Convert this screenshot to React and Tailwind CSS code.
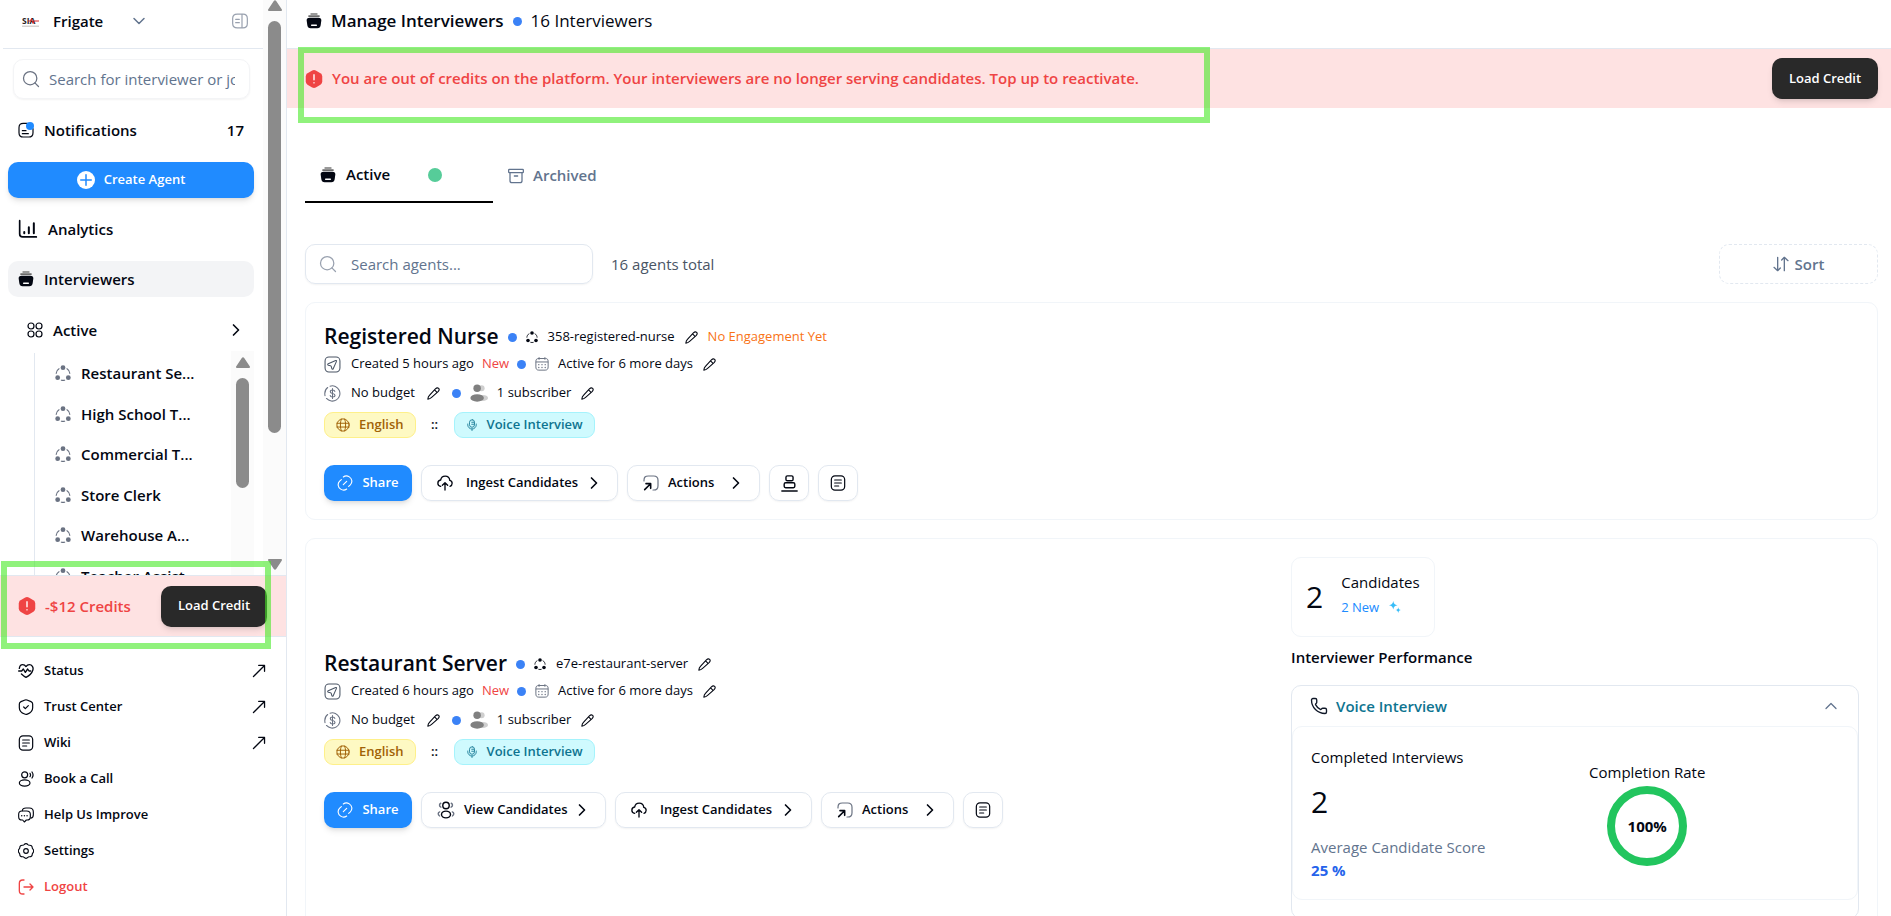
import React from 'react';
import { ChevronDown, ChevronRight, ChevronUp, Phone, Search } from 'lucide-react';

const Svg = ({ size = 'size-4', className = '', w = 1.5, children }) => (
  <svg
    viewBox="0 0 24 24"
    fill="none"
    stroke="currentColor"
    strokeWidth={w}
    strokeLinecap="round"
    strokeLinejoin="round"
    aria-hidden="true"
    className={`shrink-0 ${size} ${className}`}
  >
    {children}
  </svg>
);

const StackIcon = () => (
  <Svg w={2}>
    <path d="M7.500 1.500h9" stroke="#7a7a7a" />
    <path d="M4.500 4.600h15" stroke="#6b6b6b" strokeWidth={2.600} />
    <path
      d="M5.500 7h13c3.200 0 4.900 1.600 4.500 4.200l-1 7.300c-.4 3-2 4.500-5 4.500H7c-3 0-4.600-1.500-5-4.500l-1-7.300C.6 8.600 2.300 7 5.500 7z"
      fill="currentColor"
      stroke="none"
    />
    <path d="M8.500 18.500h7" stroke="white" strokeWidth={2.200} />
  </Svg>
);

const NotificationIcon = () => (
  <Svg w={1.800}>
    <path d="M14 2H8C3.500 2 1.500 4 1.500 8.500V16c0 4.500 2 6.500 6.500 6.500h8c4.500 0 6.500-2 6.500-6.500v-6" />
    <path d="M6.500 13H12M6.500 17.500h9" />
    <circle cx="18" cy="6" r="6" fill="#208bff" stroke="none" />
  </Svg>
);

const ChartIcon = () => (
  <Svg size="size-5" w={2}>
    <path d="M2 2v16c0 2 1 3.500 3.500 3.500H22" />
    <path d="M7.500 15.500V17M13 10v7M19 5v12" strokeWidth={2.400} />
  </Svg>
);

const GridIcon = () => (
  <Svg w={1.800}>
    <circle cx="6" cy="6" r="4.500" />
    <circle cx="18" cy="6" r="4.500" />
    <circle cx="6" cy="18" r="4.500" />
    <circle cx="18" cy="18" r="4.500" />
  </Svg>
);

const NodesIcon = ({ size, className }) => (
  <Svg size={size} className={className} w={1.700}>
    <g fill="currentColor" stroke="none">
      <circle cx="12" cy="4" r="3.600" />
      <circle cx="4" cy="19" r="3.600" />
      <circle cx="20" cy="19" r="3.600" />
    </g>
    <path d="M6 5.500C3.500 7 2 9.500 1.800 12.500M18 5.500c2.500 1.500 4 4 4.200 7M9.500 22.800c1.600.4 3.400.4 5 0" />
  </Svg>
);

const DangerIcon = () => (
  <Svg size="size-[18px]">
    <path
      d="M9.600.8a5 5 0 0 1 4.800 0l6.200 3.600A5 5 0 0 1 23 8.600v6.800a5 5 0 0 1-2.400 4.200l-6.200 3.600a5 5 0 0 1-4.800 0l-6.200-3.600A5 5 0 0 1 1 15.400V8.600a5 5 0 0 1 2.400-4.200z"
      fill="#ef4444"
      stroke="none"
    />
    <path d="M12 6.500v6.500M12 17v.1" stroke="#fee2e2" strokeWidth={2.200} />
  </Svg>
);

const StatusIcon = () => (
  <Svg w={2}>
    <path d="M2 8C2.500 4.500 4.500 2.500 7 2.500c2 0 3.800 1 5 2.800 1.200-1.800 3-2.800 5-2.800 4 0 6.500 4 5.300 8C20.800 15.500 15 20 12 21.500c-1.800-.9-4.500-2.800-6.800-5" />
    <path d="M1 12h4.500l2.500-3 3 5 3.500-5 2 3h2.500" />
  </Svg>
);

const ShieldIcon = () => (
  <Svg w={1.800}>
    <path d="M10.500 1.500 4.500 4C3 4.600 2 6 2 7.500V13c0 4.500 4 8 8 9.600 1.300.5 2.700.5 4 0 4-1.600 8-5.100 8-9.600V7.500C22 6 21 4.600 19.500 4l-6-2.500a4 4 0 0 0-3 0z" />
    <path d="m8.500 12 2.500 2.500L15.500 10" />
  </Svg>
);

const NoteIcon = ({ size }) => (
  <Svg size={size} w={1.800}>
    <rect x="2" y="1.300" width="20" height="21.400" rx="5.500" />
    <path d="M7 7.500h10M7 12h10M7 16.500h6" />
  </Svg>
);

const UserSpeakIcon = () => (
  <Svg w={1.800}>
    <circle cx="10" cy="5.800" r="4.500" />
    <ellipse cx="10" cy="18" rx="8" ry="4.600" />
    <path d="M18 3.500c1 1.500 1 3.500 0 5M21 1.500c2 2.800 2 6.200 0 9" />
  </Svg>
);

const ChatIcon = () => (
  <Svg w={1.700}>
    <path d="M6.500 5.500C6.800 2.500 8.500 1.500 12 1.500h5c4.500 0 6 1.600 6 6v4c0 3-1 4.700-3.500 5.200" />
    <path d="M6 6h7c4 0 5.500 1.500 5.500 5v3.500c0 3.500-1.500 5-5 5h-1L9.500 22.500 7 19.500H6c-3.500 0-5-1.500-5-5V11c0-3.500 1.500-5 5-5z" />
    <path d="M5.600 13v.1M9.600 13v.1M13.600 13v.1" strokeWidth={2.200} />
  </Svg>
);

const GearIcon = () => (
  <Svg w={1.700}>
    <circle cx="12" cy="12" r="3.500" />
    <path d="M9.300 2.300c1.300-1.700 4.100-1.700 5.400 0 .6.900 1.500 1.300 2.600 1.100 2.200-.3 3.900 1.100 4 3.200 0 1 .3 1.700 1 2.400 1.400 1.700 1.400 4.300 0 6-.7.700-1 1.400-1 2.400-.1 2.100-1.800 3.500-4 3.200-1.100-.2-2 .2-2.600 1.100-1.300 1.700-4.100 1.700-5.400 0-.6-.9-1.500-1.300-2.600-1.100-2.200.3-3.900-1.100-4-3.200 0-1-.3-1.700-1-2.400-1.400-1.700-1.400-4.300 0-6 .7-.7 1-1.400 1-2.400.1-2.100 1.800-3.500 4-3.200 1.100.2 2-.2 2.600-1.100z" />
  </Svg>
);

const LogoutIcon = () => (
  <Svg w={2}>
    <path d="M9 1.500H7c-3.500 0-5 1.500-5 5v11c0 3.500 1.500 5 5 5h2" />
    <path d="M9 12h13.500M18 7.500l4.500 4.500-4.500 4.500" />
  </Svg>
);

const ArrowOut = () => (
  <Svg size="size-3.5" w={2.200}>
    <path d="M2.500 21.500 21 3M11.500 2.500H21.500V12.500" />
  </Svg>
);

const SidebarIcon = () => (
  <Svg className="text-gray-400" w={1.800}>
    <path d="M15 1.800H8c-5 0-7 2-7 6.500v7.400c0 4.500 2 6.500 7 6.500h7zM15 1.800h1.500c4.500 0 6.500 2 6.500 6.500v7.400c0 4.500-2 6.500-6.500 6.500H15z" />
    <path d="M5.500 9.500H11M5.500 14.500H11" />
  </Svg>
);

const PencilIcon = () => (
  <Svg size="size-[13px]" w={2}>
    <path d="M15.500 3.500c2-2 4.500-2.300 6-1 1.400 1.500 1 4-1 6L8.500 19c-2 1.800-4 3-7 3.500.3-3 1.300-5.200 3-7zM14 5.500l4.500 4.500" />
  </Svg>
);

const SendIcon = () => (
  <Svg size="size-[17px]" className="text-gray-600">
    <rect x="1.500" y="1.500" width="21" height="21" rx="5.500" />
    <path d="m6 11 10.500-4.500c1-.4 1.500.1 1.100 1.100L13 18c-.5 1.100-1.600 1-1.900-.1l-.8-3c-.1-.5-.5-.9-1-1L6.100 13c-1.200-.4-1.200-1.500-.1-2z" />
  </Svg>
);

const CalendarIcon = () => (
  <Svg size="size-3.5" className="text-gray-500" w={1.700}>
    <path d="M7 1v3M17 1v3M1.800 8.500h20.400M6 2.600h12c3 0 4.500 1.500 4.500 5V17c0 3.500-1.500 5.500-5 5.500h-11c-3.500 0-5-2-5-5.500V7.600c0-3.500 1.500-5 4.500-5z" />
    <path d="M6.500 13v.1M12 13v.1M17.500 13v.1M6.500 18v.1M12 18v.1M17.500 18v.1" strokeWidth={2.400} />
  </Svg>
);

const DollarIcon = () => (
  <Svg size="size-[17px]" className="text-gray-500">
    <path d="M8.500 1.600A10.800 10.800 0 1 1 3.500 19M1.400 15C.5 10 2.500 5.500 5.200 3.500" />
    <path d="M15.300 9c-.3-1.300-1.500-2-3.200-2-1.900 0-3.200.9-3.200 2.400 0 3.600 6.600 1.600 6.600 5.200 0 1.500-1.400 2.400-3.400 2.400-1.900 0-3.200-.9-3.400-2.300M12 5v14" />
  </Svg>
);

const UsersIcon = () => (
  <Svg size="size-[18px]">
    <g stroke="none">
      <circle cx="15.500" cy="5.500" r="4" fill="#cfcfcf" />
      <ellipse cx="17" cy="18.500" rx="7" ry="4" fill="#cfcfcf" />
      <circle cx="9.500" cy="5.500" r="5" fill="#808080" />
      <ellipse cx="9.500" cy="18.500" rx="9" ry="5" fill="#808080" />
    </g>
  </Svg>
);

const GlobeIcon = () => (
  <Svg size="size-3.5" w={1.700}>
    <circle cx="12" cy="12" r="10.500" />
    <path d="M1.500 9h21M1.500 15.500h21M9 1.800C7 8 7 16 9 22.200M15 1.800c2 6.200 2 14.200 0 20.400" />
  </Svg>
);

const MicIcon = () => (
  <Svg size="size-3" w={1.700}>
    <rect x="7" y="1.500" width="10" height="15" rx="5" />
    <path d="M3.500 10v1.500a8.500 8.500 0 0 0 17 0V10M12 20v3M11.500 6.500H16M11.500 10.500H16" />
  </Svg>
);

const LinkIcon = () => (
  <Svg w={1.700}>
    <path d="M9.500 3C12 1 15.500.800 18.500 2.800c4.500 3 5 8.500 1.500 12L17.500 17M14.500 21c-2.500 2-6 2.200-9 .2-4.500-3-5-8.500-1.500-12L6.500 7M9.500 14.500l5-5" />
  </Svg>
);

const CloudIcon = () => (
  <Svg w={2}>
    <path d="M5.500 17C3 16.500 1.300 14.800 1.300 12.200c0-2.500 1.800-4.400 4.200-4.700C6.200 4 9 1.700 12.300 1.700c3.600 0 6.500 2.700 6.900 6.300 2.100.5 3.500 2.200 3.500 4.500 0 2.200-1.200 3.900-3.200 4.500" />
    <path d="M12 22.500V12M8 15.500l4-4 4 4" />
  </Svg>
);

const ActionIcon = () => (
  <Svg w={1.800}>
    <path
      d="M1.500 9V8c0-4.800 1.700-6.500 6.500-6.500h8c4.800 0 6.500 1.700 6.500 6.500v8c0 4.800-1.700 6.500-6.500 6.500h-1"
      className="text-gray-500"
      stroke="currentColor"
    />
    <path d="M2.500 22 11 13.500M4.500 13H11.500V20" strokeWidth={2.400} />
  </Svg>
);

const StampIcon = () => (
  <Svg size="size-[17px]" w={2}>
    <rect x="7" y="1.200" width="10" height="7" rx="2" />
    <rect x="4.500" y="11" width="15" height="7" rx="2" />
    <path d="M1.200 22.500h21.600" />
  </Svg>
);

const CandidatesIcon = () => (
  <Svg size="size-[18px]" w={1.900}>
    <circle cx="12" cy="6" r="4.300" />
    <ellipse cx="12" cy="18" rx="6" ry="4.500" />
    <path
      d="M5 3c-2 .8-2.500 4 .2 5.300M19 3c2 .8 2.500 4-.2 5.300M3.500 14.500c-2.500 1-2.500 4 0 5.500M20.500 14.500c2.500 1 2.500 4 0 5.500"
      className="text-gray-500"
      stroke="currentColor"
    />
  </Svg>
);

const SparkleIcon = () => (
  <Svg size="size-3">
    <g fill="#38bdf8" stroke="none">
      <path d="M8.500 0c1 5.500 3 7.500 8.500 8.500-5.500 1-7.500 3-8.500 8.500C7.500 11.500 5.500 9.500 0 8.500 5.500 7.500 7.500 5.500 8.500 0z" />
      <path d="M18.500 12.500c.6 3.500 2 5 5.500 5.700-3.500.7-4.900 2.200-5.500 5.800-.6-3.600-2-5.100-5.500-5.800 3.500-.7 4.900-2.200 5.500-5.700z" />
    </g>
  </Svg>
);

const ArchiveIcon = () => (
  <Svg w={1.900}>
    <rect x="1" y="2" width="22" height="5" rx="1" />
    <path d="M3 7.500V19c0 2 1 3 3 3h12c2 0 3-1 3-3V7.500M9.500 12h5" />
  </Svg>
);

const SortIcon = () => (
  <Svg w={2}>
    <path d="M7 2v20M1.500 17 7 22l4-4M17 22V2M13 6l4-4 5.500 5" />
  </Svg>
);

const Dot = () => <span className="size-[9px] shrink-0 rounded-full bg-[#3b82f6]" />;

const EditButton = ({ label }) => (
  <button type="button" aria-label={label}>
    <PencilIcon />
  </button>
);

const LoadCreditButton = () => (
  <button
    type="button"
    className="h-[41px] w-[106px] shrink-0 rounded-[10px] bg-[#292929] text-[13px] font-semibold text-white shadow-md"
  >
    Load Credit
  </button>
);

const Triangle = ({ down }) => (
  <svg viewBox="0 0 14 11" className="h-[11px] w-3.5" fill="#8b8b8b" aria-hidden="true">
    {down ? (
      <path d="M1 0h12c1 0 1.300.9.700 1.700L8.200 10c-.7 1-1.700 1-2.400 0L.3 1.700C-.3.900 0 0 1 0z" />
    ) : (
      <path d="M1 11h12c1 0 1.300-.9.700-1.700L8.200 1c-.7-1-1.700-1-2.400 0L.3 9.300C-.3 10.100 0 11 1 11z" />
    )}
  </svg>
);

const activeAgents = [
  'Restaurant Se...',
  'High School T...',
  'Commercial T...',
  'Store Clerk',
  'Warehouse A...',
  'Teacher Assist...',
];

const footerLinks = [
  { label: 'Status', icon: <StatusIcon />, external: true },
  { label: 'Trust Center', icon: <ShieldIcon />, external: true },
  { label: 'Wiki', icon: <NoteIcon />, external: true },
  { label: 'Book a Call', icon: <UserSpeakIcon /> },
  { label: 'Help Us Improve', icon: <ChatIcon /> },
  { label: 'Settings', icon: <GearIcon /> },
];

const SidebarTop = () => (
  <div className="flex min-h-0 flex-1">
    <div className="flex min-w-0 flex-1 flex-col">
      <div className="ml-[3px] flex h-[49px] shrink-0 items-center border-b border-slate-200 pr-[15px] pb-1.5 pl-[19px]">
        <svg viewBox="0 0 34 22" className="h-[11px] w-[17px]" aria-hidden="true">
          <rect y="19" width="34" height="3" fill="#d6d3d1" />
          <text x="0" y="16" fontSize="17" fontWeight="700" fill="#292524">
            SIA
          </text>
          <path d="M12 10h5l2-5 3 10 2-5h10" stroke="#dc2626" strokeWidth="2" fill="none" />
        </svg>
        <button type="button" className="ml-3.5 flex items-center gap-[26px] text-[15px] font-semibold">
          Frigate
          <ChevronDown className="size-5 text-slate-500" strokeWidth={1.800} />
        </button>
        <button type="button" aria-label="Collapse sidebar" className="ml-auto">
          <SidebarIcon />
        </button>
      </div>

      <label className="mt-[10px] mr-[13px] ml-[13px] flex h-10 shrink-0 items-center gap-2 rounded-[10px] border border-gray-100 pr-3.5 pl-[7px] shadow-xs">
        <Search className="size-5 shrink-0 text-gray-500" strokeWidth={1.500} />
        <input
          type="text"
          aria-label="Search interviewers"
          placeholder="Search for interviewer or job"
          className="w-full min-w-0 text-[15px] outline-none placeholder:text-slate-500"
        />
      </label>

      <nav className="flex min-h-0 flex-1 flex-col pr-[9px] pl-2 text-[15px] font-semibold">
        <a href="#notifications" className="mt-[13px] flex h-9 shrink-0 items-center gap-2.5 px-2.5">
          <NotificationIcon />
          Notifications
          <span className="ml-auto">17</span>
        </a>
        <button
          type="button"
          className="mt-3.5 flex h-9 shrink-0 items-center justify-center gap-[9px] rounded-[10px] bg-[#208bff] text-[13px] text-white shadow-md"
        >
          <svg viewBox="0 0 24 24" className="size-[18px]" aria-hidden="true">
            <circle cx="12" cy="12" r="12" fill="white" />
            <path d="M12 5v14M5 12h14" stroke="#208bff" strokeWidth="2" strokeLinecap="round" />
          </svg>
          Create Agent
        </button>
        <a href="#analytics" className="mt-[13px] flex h-9 shrink-0 items-center gap-2.5 px-2.5">
          <ChartIcon />
          Analytics
        </a>
        <a
          href="#interviewers"
          className="mt-3.5 flex h-9 shrink-0 items-center gap-2.5 rounded-[10px] bg-gray-100 px-2.5"
        >
          <StackIcon />
          Interviewers
        </a>
        <button type="button" className="mt-[15px] flex h-9 shrink-0 items-center gap-2.5 pr-2 pl-[19px]">
          <GridIcon />
          Active
          <ChevronRight className="ml-auto size-5" />
        </button>

        <div className="mt-[3px] ml-[26px] flex min-h-0 flex-1 justify-between overflow-hidden">
          <div className="mt-0.5 min-w-0 flex-1 border-l border-slate-200 pl-5">
            <ul className="grid h-[243px] grid-rows-6">
              {activeAgents.map((name) => (
                <li key={name} className="flex items-center">
                  <a href="#agent" className="flex items-center gap-2.5 whitespace-nowrap">
                    <NodesIcon className="text-gray-500" />
                    {name}
                  </a>
                </li>
              ))}
            </ul>
          </div>
          <div className="flex w-[23px] shrink-0 flex-col items-center bg-[#fbfbfb] pt-1.5">
            <Triangle />
            <div className="mt-2.5 h-[110px] w-[13px] rounded-full bg-[#8b8b8b]" />
          </div>
        </div>
      </nav>
    </div>

    <div className="flex w-[23px] shrink-0 flex-col items-center bg-[#fbfbfb] pb-[5px]">
      <Triangle />
      <div className="mt-2.5 h-[412px] w-[13px] rounded-full bg-[#8b8b8b]" />
      <div className="mt-auto">
        <Triangle down />
      </div>
    </div>
  </div>
);

const Sidebar = () => (
  <aside className="flex w-[287px] shrink-0 flex-col border-r border-slate-200">
    <SidebarTop />
    <div className="relative flex h-[62px] shrink-0 items-center justify-between border-y border-slate-200 bg-[#fee2e2] pr-[19px] pl-[18px]">
      <p className="flex items-center gap-[9px] text-[15px] font-semibold text-[#ef4444]">
        <DangerIcon />
        -$12 Credits
      </p>
      <LoadCreditButton />
      <div className="pointer-events-none absolute -top-[15px] -bottom-[13px] left-px w-[270px] border-6 border-[rgb(70_233_37/0.6)]" />
    </div>
    <ul className="h-[279px] shrink-0 pt-4 pr-5 pl-[18px] text-[13px] font-semibold">
      {footerLinks.map(({ label, icon, external }) => (
        <li key={label}>
          <a href="#link" className="flex h-9 items-center gap-2.5">
            {icon}
            {label}
            {external && (
              <span className="ml-auto">
                <ArrowOut />
              </span>
            )}
          </a>
        </li>
      ))}
      <li>
        <button type="button" className="flex h-9 items-center gap-2.5 text-[#ef4444]">
          <LogoutIcon />
          Logout
        </button>
      </li>
    </ul>
  </aside>
);

const OutlineButton = ({ icon, label, width, gap = 'gap-[9px]' }) => (
  <button
    type="button"
    className={`flex h-9 items-center justify-between rounded-[10px] border border-slate-200 pr-[13px] pl-[15px] font-semibold whitespace-nowrap shadow-xs ${width}`}
  >
    <span className={`flex items-center ${gap}`}>
      {icon}
      {label}
    </span>
    <ChevronRight className="size-5 shrink-0" />
  </button>
);

const IconButton = ({ icon, label }) => (
  <button
    type="button"
    aria-label={label}
    className="flex h-9 w-10 items-center justify-center rounded-[10px] border border-slate-200 shadow-xs"
  >
    {icon}
  </button>
);

const AgentInfo = ({ name, slug, created, noEngagement, hasCandidates }) => (
  <div className="text-[13px]">
    <div className="flex h-8 items-center">
      <h2 className="mr-[9px] text-[21px] font-semibold">{name}</h2>
      <Dot />
      <span className="mr-2.5 ml-[9px] flex items-center gap-2.5">
        <NodesIcon size="size-3" />
        {slug}
      </span>
      <EditButton label="Edit slug" />
      {noEngagement && <span className="ml-2.5 text-[#f97316]">No Engagement Yet</span>}
    </div>
    <div className="flex h-[22px] items-center">
      <SendIcon />
      <span className="ml-2.5">Created {created} ago</span>
      <span className="mx-2 text-[#ef4444]">New</span>
      <Dot />
      <span className="mr-2.5 ml-[9px] flex items-center gap-[9px]">
        <CalendarIcon />
        Active for 6 more days
      </span>
      <EditButton label="Edit active period" />
    </div>
    <div className="mt-1 flex h-7 items-center">
      <DollarIcon />
      <span className="mr-3 ml-2.5">No budget</span>
      <EditButton label="Edit budget" />
      <span className="ml-3 flex items-center gap-[9px]">
        <Dot />
        <UsersIcon />
      </span>
      <span className="mr-2.5 ml-[9px]">1 subscriber</span>
      <EditButton label="Edit subscribers" />
    </div>
    <div className="mt-[5px] flex h-[26px] items-center font-semibold">
      <span className="flex h-[26px] items-center gap-[9px] rounded-[9px] border border-[#fef08a] bg-[#fef9c3] px-[11px] text-[#a16207]">
        <GlobeIcon />
        English
      </span>
      <span className="w-[38px] text-center">::</span>
      <span className="flex h-[26px] items-center gap-[9px] rounded-[9px] border border-[#a5f3fc] bg-[#cffafe] px-[11px] text-[#0e7490]">
        <MicIcon />
        Voice Interview
      </span>
    </div>
    <div className="mt-[27px] flex gap-[9px]">
      <button
        type="button"
        className="flex h-9 w-22 items-center justify-center gap-[9px] rounded-[10px] bg-[#208bff] font-semibold text-white shadow-md"
      >
        <LinkIcon />
        Share
      </button>
      {hasCandidates && (
        <OutlineButton icon={<CandidatesIcon />} label="View Candidates" width="w-[185px]" />
      )}
      <OutlineButton icon={<CloudIcon />} label="Ingest Candidates" width="w-[197px]" gap="gap-[13px]" />
      <OutlineButton icon={<ActionIcon />} label="Actions" width="w-[133px]" />
      {!hasCandidates && <IconButton icon={<StampIcon />} label="Stamp" />}
      <IconButton icon={<NoteIcon />} label="Notes" />
    </div>
  </div>
);

const Performance = () => (
  <div className="w-[37%] text-[15px]">
    <div className="flex h-20 w-fit items-center gap-[18px] rounded-[10px] border border-slate-100 px-3.5">
      <span className="text-[30px] leading-9">2</span>
      <div className="pb-1">
        <p className="leading-6">Candidates</p>
        <p className="flex items-center gap-2.5 text-[13px] leading-[26px] text-[#208bff]">
          2 New <SparkleIcon />
        </p>
      </div>
    </div>
    <h3 className="mt-2 text-[15px] leading-6 font-semibold">Interviewer Performance</h3>
    <section className="mt-4 rounded-[10px] border border-slate-200 pb-[18px]">
      <button
        type="button"
        className="flex h-10 w-full items-center gap-2 pr-[17px] pl-[18px] font-semibold text-[#0e7490]"
      >
        <Phone className="size-[18px] text-gray-900" strokeWidth={1.800} />
        Voice Interview
        <ChevronUp className="ml-auto size-5 text-slate-500" strokeWidth={1.500} />
      </button>
      <div className="grid grid-cols-2 items-center gap-7 rounded-[10px] border border-slate-100 p-[18px]">
        <div>
          <p className="leading-6">Completed Interviews</p>
          <p className="my-[15px] text-[30px] leading-9">2</p>
          <p className="leading-6 text-slate-500">Average Candidate Score</p>
          <p className="leading-[22px] font-bold text-[#2563eb]">25 %</p>
        </div>
        <div className="flex w-fit flex-col items-center">
          <p className="leading-6">Completion Rate</p>
          <div className="mt-0.5 flex size-20 items-center justify-center rounded-full border-8 border-[#22c55e] text-[15px] font-bold">
            100%
          </div>
        </div>
      </div>
    </section>
  </div>
);

const App = () => (
  <div className="flex h-screen overflow-hidden bg-white font-['Open_Sans','Noto_Sans',sans-serif] text-gray-950">
    <Sidebar />
    <main className="min-w-0 flex-1">
      <header className="flex h-[49px] items-center gap-[9px] border-b border-slate-200 pb-1.5 pl-[19px] text-[17px]">
        <StackIcon />
        <h1 className="font-semibold">Manage Interviewers</h1>
        <Dot />
        <span>16 Interviewers</span>
      </header>

      <div className="relative flex h-[59px] items-center justify-between bg-[#fee2e2] pr-[13px] pl-[18px]">
        <p className="flex items-center gap-[9px] text-[15px] font-semibold text-[#ef4444]">
          <DangerIcon />
          You are out of credits on the platform. Your interviewers are no longer serving candidates. Top up to
          reactivate.
        </p>
        <LoadCreditButton />
        <div className="pointer-events-none absolute -top-0.5 -bottom-[15px] left-[11px] w-[912px] border-6 border-[rgb(70_233_37/0.6)]" />
      </div>

      <div className="pr-[13px] pl-[18px]">
        <div className="mt-10 flex text-[15px] font-semibold">
          <button type="button" className="flex h-[55px] w-[188px] items-center gap-2.5 border-b-2 border-black pl-[15px]">
            <StackIcon />
            Active
            <span className="ml-7 size-3.5 rounded-full bg-[#56cc99]" />
          </button>
          <button type="button" className="flex h-[55px] items-center gap-[9px] pl-[15px] text-slate-500">
            <ArchiveIcon />
            Archived
          </button>
        </div>

        <div className="mt-[41px] flex items-center text-[15px]">
          <label className="flex h-10 w-72 items-center gap-[13px] rounded-[10px] border border-slate-200 px-3 shadow-xs">
            <Search className="size-5 shrink-0 text-gray-400" strokeWidth={1.500} />
            <input
              type="text"
              aria-label="Search agents"
              placeholder="Search agents..."
              className="w-full min-w-0 outline-none placeholder:text-slate-500"
            />
          </label>
          <span className="ml-[18px] text-gray-600">16 agents total</span>
          <button
            type="button"
            className="ml-auto flex h-10 w-[159px] items-center justify-center gap-1.5 rounded-[10px] border border-dashed border-slate-200 font-semibold text-slate-500"
          >
            <SortIcon />
            Sort
          </button>
        </div>

        <article className="mt-[18px] rounded-[10px] border border-slate-100 p-[18px]">
          <AgentInfo name="Registered Nurse" slug="358-registered-nurse" created="5 hours" noEngagement />
        </article>

        <article className="mt-[18px] flex items-center justify-between rounded-[10px] border border-slate-100 p-[18px]">
          <AgentInfo name="Restaurant Server" slug="e7e-restaurant-server" created="6 hours" hasCandidates />
          <Performance />
        </article>
      </div>
    </main>
  </div>
);

export default App;
